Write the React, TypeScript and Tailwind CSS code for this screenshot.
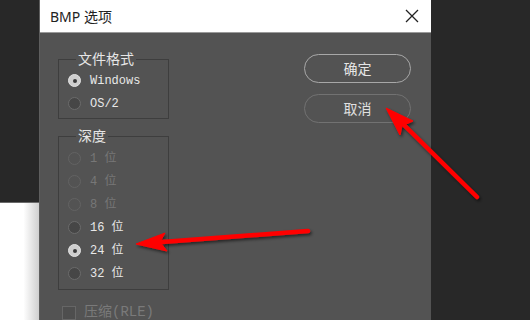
import React from "react";

const sans = { fontFamily: '"Noto Sans", "Noto Sans CJK SC", sans-serif' };
const mono = { fontFamily: '"Liberation Mono", "Noto Sans CJK SC", monospace' };

function Radio({ checked, disabled }: { checked?: boolean; disabled?: boolean }) {
  if (checked) {
    return (
      <span className="flex h-[13px] w-[13px] shrink-0 items-center justify-center rounded-full border border-[#e2e2e2] bg-[#cfcfcf]">
        <span className="h-[4px] w-[4px] rounded-full bg-[#3a3a3a]" />
      </span>
    );
  }
  return (
    <span
      className={
        disabled
          ? "h-[13px] w-[13px] shrink-0 rounded-full border border-[#636363] bg-[#535353]"
          : "h-[13px] w-[13px] shrink-0 rounded-full border border-[#6b6b6b] bg-[#464646]"
      }
    />
  );
}

function Option({ label, checked, disabled }: { label: string; checked?: boolean; disabled?: boolean }) {
  return (
    <div className="flex h-[23px] items-center gap-[9px]">
      <Radio checked={checked} disabled={disabled} />
      <span
        style={mono}
        className={disabled ? "text-[12px] text-[#777777]" : "text-[12px] text-[#e8e8e8]"}
      >
        {label}
      </span>
    </div>
  );
}

function GroupBox({ title, className, children }: { title: string; className: string; children: React.ReactNode }) {
  return (
    <div className={"relative w-[111px] border border-[#3e3e3e] pl-[9px] " + className}>
      {/* caption sits over the top border */}
      <span
        style={sans}
        className="absolute left-[17px] top-[-11px] bg-[#535353] px-[2px] text-[14px] leading-[20px] text-[#e6e6e6]"
      >
        {title}
      </span>
      {children}
    </div>
  );
}

function PillButton({ label, dim }: { label: string; dim?: boolean }) {
  return (
    <button
      style={sans}
      className={
        dim
          ? "flex h-[29px] w-[107px] items-center justify-center rounded-full border border-[#727272] text-[14px] text-[#e0e0e0]"
          : "flex h-[29px] w-[107px] items-center justify-center rounded-full border border-[#a8a8a8] text-[14px] text-[#e6e6e6]"
      }
    >
      {label}
    </button>
  );
}

export default function App() {
  return (
    <div className="relative h-[320px] w-[530px] overflow-hidden bg-[#282828]">
      {/* window behind, bottom left */}
      <div className="absolute left-0 top-[202px] h-[118px] w-[39px] border-t border-[#6a6a6a] bg-gradient-to-r from-white from-60% to-[#cfcfcf]" />

      {/* dialog */}
      <div className="absolute left-[39px] top-0 flex h-[320px] w-[392px] flex-col border-l border-[#5e5e5e] bg-[#535353]">
        <div className="flex h-[33px] shrink-0 items-center justify-between border-b border-[#9a9a9a] bg-white pl-[10px] pr-[11px]">
          <span style={sans} className="text-[14px] text-[#222222]">
            BMP 选项
          </span>
          <svg width="16" height="16" viewBox="0 0 16 16">
            <path d="M2 2 L14 14 M14 2 L2 14" stroke="#222" strokeWidth="1.3" fill="none" />
          </svg>
        </div>

        <div className="flex">
          <div className="flex flex-col pl-[18px]">
            <GroupBox title="文件格式" className="mt-[26px] h-[60px] pt-[9px]">
              <Option label="Windows" checked />
              <Option label="OS/2" />
            </GroupBox>

            <GroupBox title="深度" className="mt-[17px] h-[154px] pt-[10px]">
              <Option label="1 位" disabled />
              <Option label="4 位" disabled />
              <Option label="8 位" disabled />
              <Option label="16 位" />
              <Option label="24 位" checked />
              <Option label="32 位" />
            </GroupBox>

            <div className="mt-[12px] flex items-center gap-[8px] pl-[4px]">
              <span className="h-[14px] w-[14px] border border-[#666666] bg-[#4e4e4e]" />
              <span style={mono} className="text-[14px] text-[#7a7a7a]">
                压缩(RLE)
              </span>
            </div>
          </div>

          <div className="ml-[135px] mt-[21px] flex flex-col gap-[11px]">
            <PillButton label="确定" />
            <PillButton label="取消" dim />
          </div>
        </div>
      </div>

      {/* annotation arrows */}
      <svg className="absolute inset-0" width="530" height="320" viewBox="0 0 530 320">
        <defs>
          <filter id="sh" x="-20%" y="-20%" width="140%" height="140%">
            <feDropShadow dx="1.5" dy="2" stdDeviation="1.5" floodColor="#000" floodOpacity="0.55" />
          </filter>
        </defs>
        <g filter="url(#sh)" fill="#ff0000" stroke="#ff0000">
          <line x1="477" y1="197" x2="404" y2="125" strokeWidth="4.5" strokeLinecap="round" />
          <polygon points="386,108 413,121 402,126 400,135" strokeWidth="1" strokeLinejoin="round" />
          <line x1="308" y1="231" x2="162" y2="242" strokeWidth="4.5" strokeLinecap="round" />
          <polygon points="136,244 165,233 160,242 167,251" strokeWidth="1" strokeLinejoin="round" />
        </g>
      </svg>
    </div>
  );
}
